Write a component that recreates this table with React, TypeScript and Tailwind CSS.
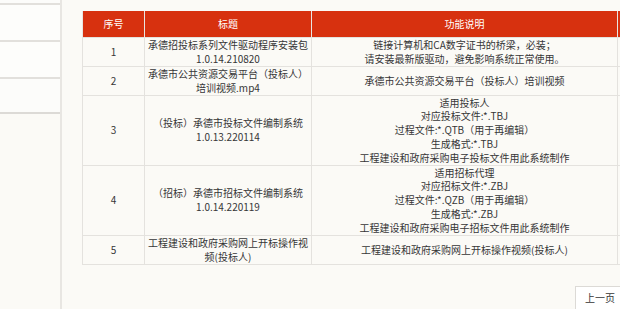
import React from "react";

const rows: { no: string; title: string[]; desc: string[]; h: string }[] = [
  {
    no: "1",
    title: ["承德招投标系列文件驱动程序安装包", "1.0.14.210820"],
    desc: ["链接计算机和CA数字证书的桥梁，必装；", "请安装最新版驱动，避免影响系统正常使用。"],
    h: "h-[29px]",
  },
  {
    no: "2",
    title: ["承德市公共资源交易平台（投标人）", "培训视频.mp4"],
    desc: ["承德市公共资源交易平台（投标人）培训视频"],
    h: "h-[29px]",
  },
  {
    no: "3",
    title: ["（投标）承德市投标文件编制系统", "1.0.13.220114"],
    desc: [
      "适用投标人",
      "对应投标文件:*.TBJ",
      "过程文件:*.QTB（用于再编辑）",
      "生成格式:*.TBJ",
      "工程建设和政府采购电子投标文件用此系统制作",
    ],
    h: "h-[70px]",
  },
  {
    no: "4",
    title: ["（招标）承德市招标文件编制系统", "1.0.14.220119"],
    desc: [
      "适用招标代理",
      "对应招标文件:*.ZBJ",
      "过程文件:*.QZB（用于再编辑）",
      "生成格式:*.ZBJ",
      "工程建设和政府采购电子招标文件用此系统制作",
    ],
    h: "h-[70px]",
  },
  {
    no: "5",
    title: ["工程建设和政府采购网上开标操作视", "频(投标人)"],
    desc: ["工程建设和政府采购网上开标操作视频(投标人)"],
    h: "h-[29px]",
  },
];

export default function App() {
  return (
    <div
      className="relative w-[620px] h-[309px] overflow-hidden bg-[#fbfaf6] text-[#363636]"
      style={{ fontFamily: '"Noto Sans CJK SC", "Noto Sans", sans-serif' }}
    >
      <div className="flex h-full">
        {/* left panel */}
        <div className="w-[60px] shrink-0 h-full flex flex-col">
          <div className="h-[3px] bg-[#fcfcfa]" />
          <div className="h-[2px] bg-[#e2e0dc]" />
          <div className="h-[35px] bg-[#fdfdfb]" />
          <div className="h-[2px] bg-[#e2e0dc]" />
          <div className="h-[35px] bg-[#fdfdfb]" />
          <div className="h-[2px] bg-[#e2e0dc]" />
          <div className="h-[33px] bg-[#fcfcfa]" />
          <div className="h-[2px] bg-[#dcdad6]" />
        </div>
        <div className="w-[2px] shrink-0 h-full bg-[#e8e6e2]" />
        {/* main */}
        <div className="flex-1 min-w-0 pl-[20px] pt-[11px] flex flex-col">
          <div className="w-[700px]">
            <table className="table-fixed border-collapse w-[700px] text-[10px] leading-[13.8px]">
              <colgroup>
                <col className="w-[62px]" />
                <col className="w-[167px]" />
                <col className="w-[306px]" />
                <col className="w-[165px]" />
              </colgroup>
              <thead>
                <tr className="h-[26px] bg-[#d7310f] text-white">
                  <th className="font-normal border-x border-[#e8e6e2] border-t-0">序号</th>
                  <th className="font-normal border-x border-[#e8e6e2]">标题</th>
                  <th className="font-normal border-x border-[#e8e6e2]">功能说明</th>
                  <th className="font-normal border-x border-[#e8e6e2]"></th>
                </tr>
              </thead>
              <tbody>
                {rows.map((r) => (
                  <tr key={r.no} className={r.h}>
                    <td className="border border-[#e4e2de] text-center align-middle p-0">{r.no}</td>
                    <td className="border border-[#e4e2de] text-center align-middle p-0 whitespace-nowrap">
                      {r.title.map((t, i) => (
                        <div key={i}>{t}</div>
                      ))}
                    </td>
                    <td className="border border-[#e4e2de] text-center align-middle p-0 whitespace-nowrap">
                      {r.desc.map((t, i) => (
                        <div key={i}>{t}</div>
                      ))}
                    </td>
                    <td className="border border-[#e4e2de] p-0"></td>
                  </tr>
                ))}
              </tbody>
            </table>
          </div>
          <div className="mt-[21px] flex">
            <div className="ml-[493px] shrink-0 w-[60px] h-[26px] border border-[#dcdad6] bg-white text-[10px] leading-[20px] pl-[9px] pt-[1px]">
              上一页
            </div>
          </div>
        </div>
      </div>
    </div>
  );
}
